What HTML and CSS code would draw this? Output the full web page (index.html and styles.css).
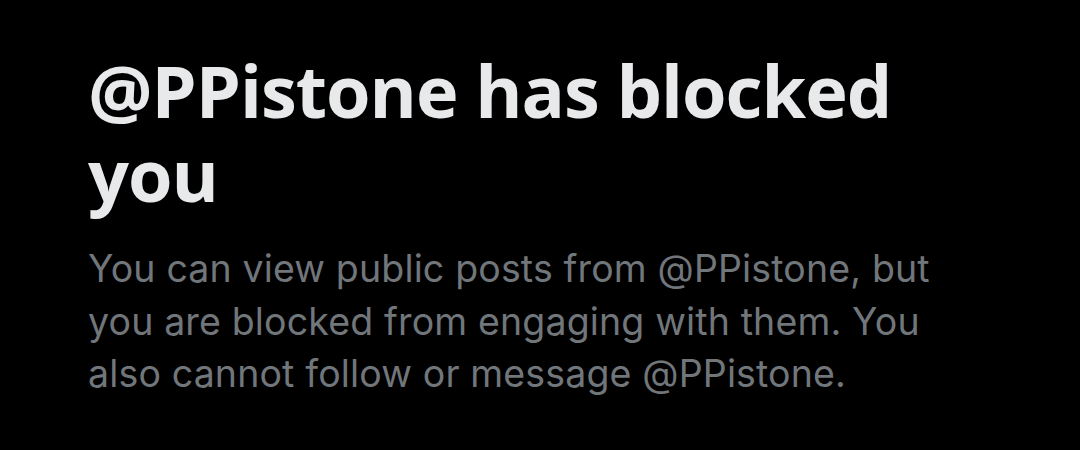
FILE: index.html
```html
<!DOCTYPE html>
<html>
<head>
<meta charset="utf-8">
<link rel="stylesheet" href="styles.css">
</head>
<body>
<main class="blocked">
  <h1 class="title">@PPistone has blocked you</h1>
  <p class="desc">You can view public posts from @PPistone, but you are blocked from engaging with them. You also cannot follow or message @PPistone.</p>
</main>
</body>
</html>
```
FILE: styles.css
```css
html, body {
  margin: 0;
  padding: 0;
  background: #000;
  height: 100%;
}
.blocked {
  padding: 48px 0 0 88px;
  width: 870px;
  font-family: "Open Sans", "Noto Sans", sans-serif;
}
.title {
  margin: 0;
  font-size: 72px;
  font-weight: 700;
  line-height: 84px;
  color: #e7e9ea;
  letter-spacing: -1px;
}
.desc {
  margin: 27px 0 0;
  width: 860px;
  font-family: Inter, "Noto Sans", sans-serif;
  font-size: 37.5px;
  font-weight: 400;
  line-height: 52.5px;
  letter-spacing: 0.15px;
  color: #71767b;
}
```
